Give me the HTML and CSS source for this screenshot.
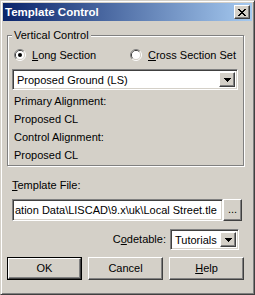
FILE: index.html
```html
<!DOCTYPE html>
<html>
<head>
<meta charset="utf-8">
<link rel="stylesheet" href="styles.css">
</head>
<body>
<div class="window">
  <div class="titlebar">
    <span class="title">Template Control</span>
    <span class="close raised-soft">
      <svg width="8" height="7" viewBox="0 0 8 7" shape-rendering="crispEdges">
        <path fill="#000" d="M0 0h2v1H0zM6 0h2v1H6zM1 1h2v1H1zM5 1h2v1H5zM2 2h4v1H2zM3 3h2v1H3zM2 4h4v1H2zM1 5h2v1H1zM5 5h2v1H5zM0 6h2v1H0zM6 6h2v1H6z"/>
      </svg>
    </span>
  </div>
  <div class="client">
    <fieldset class="group">
      <legend>Vertical Control</legend>
      <div class="radios">
        <div class="radio radio-first">
          <svg class="radio-icon" width="12" height="12" viewBox="0 0 12 12">
            <path d="M2.11 9.89A5.5 5.5 0 0 1 9.89 2.11" fill="none" stroke="#808080"/>
            <path d="M9.89 2.11A5.5 5.5 0 0 1 2.11 9.89" fill="none" stroke="#ffffff"/>
            <path d="M2.82 9.18A4.5 4.5 0 0 1 9.18 2.82" fill="none" stroke="#404040"/>
            <path d="M9.18 2.82A4.5 4.5 0 0 1 2.82 9.18" fill="none" stroke="#d4d0c8"/>
            <circle cx="6" cy="6" r="4" fill="#ffffff"/>
            <circle cx="6" cy="6" r="2" fill="#000000"/>
          </svg>
          <span><u>L</u>ong Section</span>
        </div>
        <div class="radio">
          <svg class="radio-icon" width="12" height="12" viewBox="0 0 12 12">
            <path d="M2.11 9.89A5.5 5.5 0 0 1 9.89 2.11" fill="none" stroke="#808080"/>
            <path d="M9.89 2.11A5.5 5.5 0 0 1 2.11 9.89" fill="none" stroke="#ffffff"/>
            <path d="M2.82 9.18A4.5 4.5 0 0 1 9.18 2.82" fill="none" stroke="#404040"/>
            <path d="M9.18 2.82A4.5 4.5 0 0 1 2.82 9.18" fill="none" stroke="#d4d0c8"/>
            <circle cx="6" cy="6" r="4" fill="#ffffff"/>
          </svg>
          <span><u>C</u>ross Section Set</span>
        </div>
      </div>
      <div class="combo combo-wide sunken">
        <span class="combo-text">Proposed Ground (LS)</span>
        <span class="combo-btn raised-soft">
          <svg width="7" height="4" viewBox="0 0 7 4" shape-rendering="crispEdges"><path fill="#000" d="M0 0h7v1H0zM1 1h5v1H1zM2 2h3v1H2zM3 3h1v1H3z"/></svg>
        </span>
      </div>
      <div class="info">
        <div class="info-line">Primary Alignment:</div>
        <div class="info-line">Proposed CL</div>
        <div class="info-line">Control Alignment:</div>
        <div class="info-line">Proposed CL</div>
      </div>
    </fieldset>

    <div class="field-label"><u>T</u>emplate File:</div>
    <div class="file-row">
      <div class="textbox sunken"><span>ation Data\LISCAD\9.x\uk\Local Street.tle</span></div>
      <div class="btn dots-btn">...</div>
    </div>

    <div class="code-row">
      <span class="code-label">C<u>o</u>detable:</span>
      <div class="combo combo-small sunken">
        <span class="combo-text">Tutorials</span>
        <span class="combo-btn raised-soft">
          <svg width="7" height="4" viewBox="0 0 7 4" shape-rendering="crispEdges"><path fill="#000" d="M0 0h7v1H0zM1 1h5v1H1zM2 2h3v1H2zM3 3h1v1H3z"/></svg>
        </span>
      </div>
    </div>

    <div class="buttons">
      <div class="btn default-btn"><span class="btn-inner">OK</span></div>
      <div class="btn">Cancel</div>
      <div class="btn"><span><u>H</u>elp</span></div>
    </div>
  </div>
</div>
</body>
</html>
```
FILE: styles.css
```css
* { box-sizing: border-box; }
html, body { margin: 0; padding: 0; background: #d4d0c8; }
body {
  font-family: "Liberation Sans", Arial, sans-serif;
  font-size: 11px;
  color: #000;
}
.window {
  width: 255px;
  height: 295px;
  background: #d4d0c8;
  border: 1px solid;
  border-color: #d4d0c8 #404040 #404040 #d4d0c8;
  box-shadow: inset 1px 1px #ffffff, inset -1px -1px #808080;
  padding: 2px;
  display: flex;
  flex-direction: column;
}
.titlebar {
  height: 18px;
  flex: none;
  background: linear-gradient(to right, #0a246a, #a6caf0);
  display: flex;
  align-items: center;
  justify-content: space-between;
  padding: 0 2px 0 2px;
}
.title {
  color: #fff;
  font-weight: bold;
  font-size: 11.5px;
  line-height: 18px;
}
.close {
  width: 16px;
  height: 14px;
  background: #d4d0c8;
  display: flex;
  align-items: center;
  justify-content: center;
}
.raised-soft {
  border: 1px solid;
  border-color: #ffffff #404040 #404040 #ffffff;
  box-shadow: inset -1px -1px #808080, inset 1px 1px #d4d0c8;
}
.sunken {
  border: 1px solid;
  border-color: #808080 #ffffff #ffffff #808080;
  box-shadow: inset 1px 1px #404040, inset -1px -1px #d4d0c8;
  background: #fff;
}
.client {
  flex: 1;
  display: flex;
  flex-direction: column;
  padding: 0 0 0 4px;
}
.group {
  margin: 8px 0 0 0;
  width: 237px;
  border: 1px solid #808080;
  box-shadow: inset 1px 1px #ffffff, 1px 1px #ffffff;
  padding: 6px 5px 1px 4px;
  min-width: 0;
}
.group legend {
  padding: 0 2px;
  line-height: 13px;
  background: #d4d0c8;
}
.radios {
  display: flex;
  height: 14px;
  align-items: center;
  padding-left: 2px;
}
.radio {
  display: flex;
  align-items: center;
  gap: 6px;
  line-height: 13px;
  white-space: nowrap;
  flex: none;
}
.radio-first { width: 116px; }
.radio-icon { flex: none; display: block; }
.combo {
  display: flex;
  align-items: stretch;
  height: 21px;
  padding: 2px;
}
.combo-wide { width: 100%; margin-top: 7px; }
.combo-text {
  flex: 1;
  line-height: 17px;
  padding-left: 2px;
  white-space: nowrap;
  overflow: hidden;
}
.combo-btn {
  width: 16px;
  flex: none;
  background: #d4d0c8;
  display: flex;
  align-items: center;
  justify-content: center;
}
.info { margin-top: 2px; }
.info-line {
  line-height: 18px;
  padding-left: 2px;
}
.field-label {
  margin-top: 13px;
  line-height: 13px;
  padding-left: 5px;
}
.file-row {
  display: flex;
  margin-top: 7px;
  margin-left: 5px;
  height: 22px;
}
.textbox {
  width: 211px;
  padding: 2px 2px;
  line-height: 16px;
  white-space: nowrap;
  overflow: hidden;
}
.btn {
  width: 75px;
  height: 23px;
  background: #d4d0c8;
  border: 1px solid;
  border-color: #ffffff #404040 #404040 #ffffff;
  box-shadow: inset -1px -1px #808080, inset 1px 1px #d4d0c8;
  display: flex;
  align-items: center;
  justify-content: center;
  line-height: 13px;
}
.dots-btn {
  width: 19px;
  height: 22px;
  padding-bottom: 2px;
}
.code-row {
  display: flex;
  align-items: center;
  justify-content: flex-end;
  margin-top: 8px;
  padding-right: 13px;
  height: 21px;
}
.code-label { margin-right: 4px; line-height: 13px; }
.combo-small { width: 69px; }
.buttons {
  display: flex;
  gap: 6px;
  margin-top: 7px;
}
.default-btn {
  border: 1px solid #000;
  box-shadow: none;
  padding: 0;
}
.btn-inner {
  flex: 1;
  align-self: stretch;
  display: flex;
  align-items: center;
  justify-content: center;
  border: 1px solid;
  border-color: #ffffff #404040 #404040 #ffffff;
  box-shadow: inset -1px -1px #808080;
}
```
